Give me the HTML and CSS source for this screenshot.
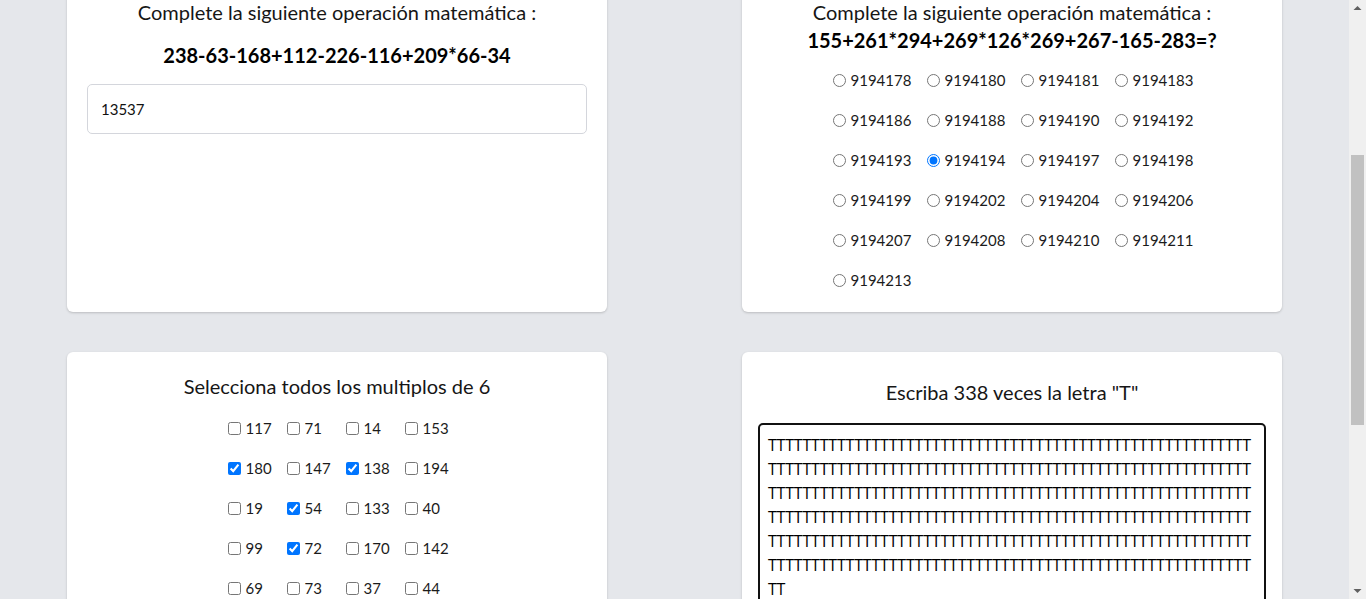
FILE: index.html
```html
<!DOCTYPE html>
<html lang="es">
<head>
<meta charset="utf-8">
<title>Operaciones</title>
<link rel="stylesheet" href="styles.css">
</head>
<body>
<main class="page">
  <div class="grid">
    <section class="card">
      <p class="title">Complete la siguiente operación matemática :</p>
      <p class="eq eq-spaced">238-63-168+112-226-116+209*66-34</p>
      <input class="answer" type="text" value="13537">
    </section>

    <section class="card">
      <p class="title">Complete la siguiente operación matemática :</p>
      <p class="eq">155+261*294+269*126*269+267-165-283=?</p>
      <div class="options">
        <label class="opt"><input type="radio" name="r">9194178</label>
        <label class="opt"><input type="radio" name="r">9194180</label>
        <label class="opt"><input type="radio" name="r">9194181</label>
        <label class="opt"><input type="radio" name="r">9194183</label>
        <label class="opt"><input type="radio" name="r">9194186</label>
        <label class="opt"><input type="radio" name="r">9194188</label>
        <label class="opt"><input type="radio" name="r">9194190</label>
        <label class="opt"><input type="radio" name="r">9194192</label>
        <label class="opt"><input type="radio" name="r">9194193</label>
        <label class="opt"><input type="radio" name="r" checked>9194194</label>
        <label class="opt"><input type="radio" name="r">9194197</label>
        <label class="opt"><input type="radio" name="r">9194198</label>
        <label class="opt"><input type="radio" name="r">9194199</label>
        <label class="opt"><input type="radio" name="r">9194202</label>
        <label class="opt"><input type="radio" name="r">9194204</label>
        <label class="opt"><input type="radio" name="r">9194206</label>
        <label class="opt"><input type="radio" name="r">9194207</label>
        <label class="opt"><input type="radio" name="r">9194208</label>
        <label class="opt"><input type="radio" name="r">9194210</label>
        <label class="opt"><input type="radio" name="r">9194211</label>
        <label class="opt"><input type="radio" name="r">9194213</label>
      </div>
    </section>

    <section class="card">
      <p class="title">Selecciona todos los multiplos de 6</p>
      <div class="checks">
        <label class="chk"><input type="checkbox">117</label>
        <label class="chk"><input type="checkbox">71</label>
        <label class="chk"><input type="checkbox">14</label>
        <label class="chk"><input type="checkbox">153</label>
        <label class="chk"><input type="checkbox" checked>180</label>
        <label class="chk"><input type="checkbox">147</label>
        <label class="chk"><input type="checkbox" checked>138</label>
        <label class="chk"><input type="checkbox">194</label>
        <label class="chk"><input type="checkbox">19</label>
        <label class="chk"><input type="checkbox" checked>54</label>
        <label class="chk"><input type="checkbox">133</label>
        <label class="chk"><input type="checkbox">40</label>
        <label class="chk"><input type="checkbox">99</label>
        <label class="chk"><input type="checkbox" checked>72</label>
        <label class="chk"><input type="checkbox">170</label>
        <label class="chk"><input type="checkbox">142</label>
        <label class="chk"><input type="checkbox">69</label>
        <label class="chk"><input type="checkbox">73</label>
        <label class="chk"><input type="checkbox">37</label>
        <label class="chk"><input type="checkbox">44</label>
      </div>
    </section>

    <section class="card card-text">
      <p class="title title-low">Escriba 338 veces la letra "T"</p>
      <textarea class="typing" spellcheck="false">TTTTTTTTTTTTTTTTTTTTTTTTTTTTTTTTTTTTTTTTTTTTTTTTTTTTTTTTTTTTTTTTTTTTTTTTTTTTTTTTTTTTTTTTTTTTTTTTTTTTTTTTTTTTTTTTTTTTTTTTTTTTTTTTTTTTTTTTTTTTTTTTTTTTTTTTTTTTTTTTTTTTTTTTTTTTTTTTTTTTTTTTTTTTTTTTTTTTTTTTTTTTTTTTTTTTTTTTTTTTTTTTTTTTTTTTTTTTTTTTTTTTTTTTTTTTTTTTTTTTTTTTTTTTTTTTTTTTTTTTTTTTTTTTTTTTTTTTTTTTTTTTTTTTTTTTTTTTTTTTTTTTTTTTTTTTTTTTTTTTTTTT</textarea>
    </section>
  </div>
</main>
<aside class="scrollbar" aria-hidden="true">
  <div class="sb-btn">
    <svg width="17" height="17" viewBox="0 0 17 17"><polygon points="4.5,10 8.5,6 12.5,10" fill="#606060"/></svg>
  </div>
  <div class="sb-track"><div class="sb-thumb"></div></div>
  <div class="sb-btn">
    <svg width="17" height="17" viewBox="0 0 17 17"><polygon points="4.5,7 8.5,11 12.5,7" fill="#606060"/></svg>
  </div>
</aside>
<script src="script.js"></script>
</body>
</html>
```

FILE: styles.css
```css
html, body {
  margin: 0;
  padding: 0;
}

html {
  overflow: hidden;
}

body {
  display: flex;
  align-items: flex-start;
  height: 100vh;
  overflow: hidden;
  background: #e5e7eb;
  color: #1b1b1b;
  font-family: Lato, "Noto Sans", sans-serif;
  font-size: 16px;
}

.page {
  flex: 1;
  min-width: 0;
}

.scrollbar {
  flex: none;
  width: 17px;
  height: 100vh;
  display: flex;
  flex-direction: column;
  background: #f0f0f0;
}

.sb-btn {
  flex: none;
  height: 17px;
}

.sb-btn svg {
  display: block;
}

.sb-track {
  flex: 1;
}

.sb-thumb {
  margin: 138px 2px 0;
  height: 270px;
  background: #c1c1c1;
}

.grid {
  display: grid;
  grid-template-columns: 540px 540px;
  column-gap: 135px;
  row-gap: 40px;
  justify-content: center;
  margin-top: -22px;
}

.card {
  background: #fff;
  border-radius: 6px;
  box-shadow: 0 1px 3px rgba(0, 0, 0, 0.12), 0 1px 2px rgba(0, 0, 0, 0.07);
  padding: 20px;
}

.card-text {
  padding: 20px 16px;
}

.title {
  margin: 0;
  font-size: 20px;
  line-height: 28px;
  text-align: center;
  color: #161616;
}

.title-low {
  margin-top: 6px;
}

.eq {
  margin: 0;
  font-size: 20px;
  line-height: 28px;
  font-weight: 700;
  text-align: center;
  color: #000;
}

.eq-spaced {
  margin-top: 15px;
}

.answer {
  display: block;
  box-sizing: border-box;
  width: 100%;
  height: 50px;
  margin-top: 15px;
  padding: 0 13px;
  border: 1px solid #d4d6dc;
  border-radius: 5px;
  font-family: inherit;
  font-size: 15px;
  color: #111;
  outline: none;
}

.options {
  display: grid;
  grid-template-columns: repeat(4, 77px);
  column-gap: 17px;
  row-gap: 16px;
  justify-content: center;
  margin-top: 14px;
}

.checks {
  display: grid;
  grid-template-columns: repeat(4, 42px);
  column-gap: 17px;
  row-gap: 16px;
  justify-content: center;
  margin-top: 16px;
}

.opt,
.chk {
  display: flex;
  align-items: center;
  gap: 5px;
  height: 24px;
  line-height: 24px;
  font-size: 15px;
  white-space: nowrap;
}

.opt input,
.chk input {
  width: 13px;
  height: 13px;
  margin: 0;
  flex: none;
}

.typing {
  display: block;
  box-sizing: border-box;
  width: 100%;
  height: 200px;
  margin-top: 17px;
  padding: 8px;
  border: 2px solid #111;
  border-radius: 5px;
  outline: none;
  resize: none;
  font-family: "Open Sans", "Noto Sans", sans-serif;
  font-size: 16px;
  line-height: 24px;
  letter-spacing: -0.19px;
  color: #000;
  overflow: hidden;
}
```

FILE: script.js
```js
(function () {
  var ta = document.querySelector('.typing');
  ta.value = 'T'.repeat(338);
  function setup() {
    try { ta.focus({ preventScroll: true }); } catch (e) { ta.focus(); }
    ta.setSelectionRange(ta.value.length, ta.value.length);
    window.scrollTo(0, 0);
  }
  setup();
  window.addEventListener('load', setup);
})();
```
